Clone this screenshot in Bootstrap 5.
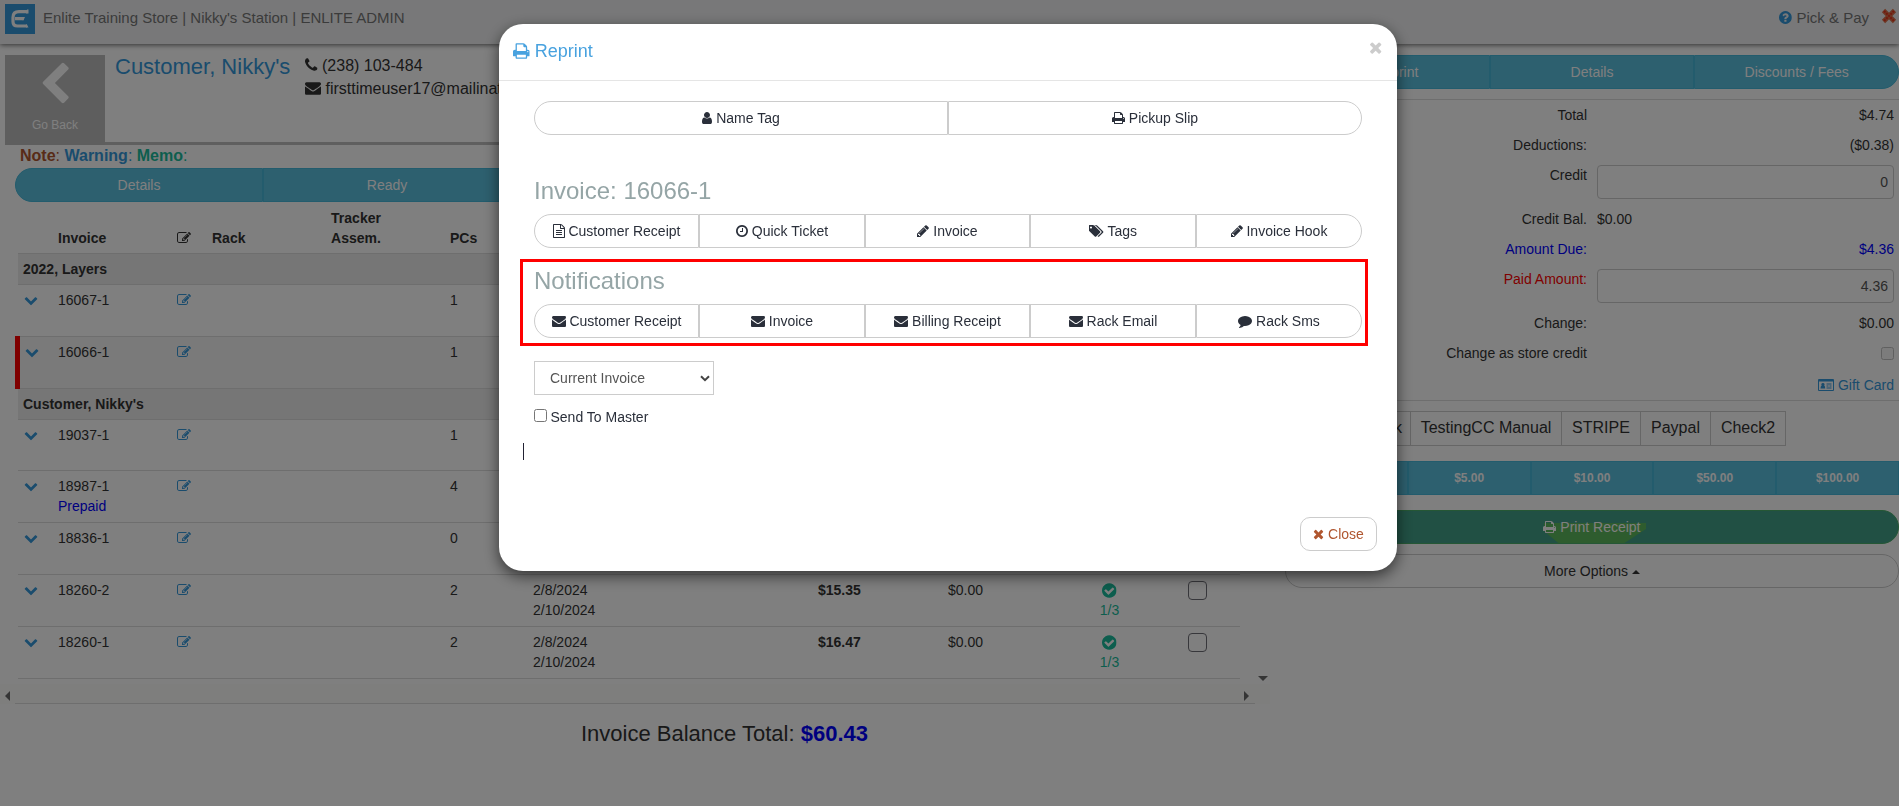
<!DOCTYPE html>
<html lang="en">
<head>
<meta charset="utf-8">
<title>Pick &amp; Pay</title>
<link href="https://cdn.jsdelivr.net/npm/bootstrap@5.3.0/dist/css/bootstrap.min.css" rel="stylesheet">
<style>
  body { font-family: "Liberation Sans", Arial, sans-serif; font-size: 14px; line-height: 20px; color: #333; overflow: hidden; height: 806px; background: #fff; }
  .btn { font-size: 14px; line-height: 20px; padding: 6px 0; white-space: nowrap; }
  .ico { height: 1em; width: 1em; fill: currentColor; vertical-align: -.143em; overflow: visible; }
  .ico-print { width: .929em; } .ico-pencil, .ico-clock, .ico-file, .ico-check, .ico-help { width: .857em; }
  .ico-tags { width: 1.071em; } .ico-user { width: .714em; } .ico-times { width: .786em; } .ico-phone { width: .786em; }
  .ico-left { width: .75em; } .ico-card { width: 1.143em; } .ico-done { font-size: 17px; line-height: 1; vertical-align: -3px; margin-bottom: -1px; }
  .link-sky { color: #3498db; } .ink-blue { color: #00f; } .ink-rust { color: #b0562f; } .ink-mint { color: #1abc9c; }

  .topbar { height: 44px; background: #f0f1f2; box-shadow: 0 1px 5px rgba(0,0,0,.6); color: #777; font-size: 15px; line-height: 20px; padding: 0 2px 8px 5px; }
  .logo { width: 30px; height: 30px; background: #3498db; margin: 2px 8px 0 0; }
  .shut { margin: -5px 0 0 12px; }
  .pane-left { width: 1270px; } .pane-right { width: 614px; padding-top: 11px; }
  .cust { height: 90px; margin: 11px 0 0 5px; border-bottom: 3px solid #bfbfbf; }
  .goback { width: 100px; height: 90px; background: #bcbcbc; color: #fff; font-size: 12px; padding-top: 7px; line-height: 16px; }
  .goback svg { font-size: 45px; display: block; margin: 0 auto 10px; }
  .cust-name { font-size: 22px; line-height: 24px; margin: 0 0 0 10px; width: 190px; }
  .cust-info { font-size: 16px; line-height: 23px; margin-top: -1px; white-space: nowrap; }
  .notes { font-size: 16px; line-height: 21px; padding: 0 0 2px 20px; }
  .bar-info { height: 34px; }
  .bar-info .btn { background: #5bc0de; border: 1px solid #46b8da; color: #fff; flex: 1 1 0; border-radius: 0; margin: 0 !important; padding: 6px 0; }
  .bar-left { width: 1240px; margin-left: 15px; }
  .round-l > :first-child { border-radius: 17px 0 0 17px !important; } .round-r > :last-child { border-radius: 0 17px 17px 0 !important; }

  .inv { table-layout: fixed; width: 1222px; margin: 0 0 0 18px; color: #333; border-collapse: separate; border-spacing: 0; }
  .inv td, .inv th { padding: 5px 5px 0; vertical-align: top; border-top: 1px solid #dcdcdc; height: 52px; }
  .inv td:first-child { padding-left: 6px; } .inv .grp td:first-child { padding-left: 5px; }
  .inv thead th { border: 0; vertical-align: bottom; padding: 0 5px 5px; height: 51px; }
  .inv .h51 td { height: 51px; } .inv .grp td { height: 31px; background: #ececec; font-weight: 700; }
  .inv .sel td { background: #f4f4f4; } .inv .sel td:first-child { position: relative; padding-left: 7px; }
  .inv .sel td:first-child::before { content: ""; position: absolute; left: -3px; top: -1px; width: 5px; height: 53px; background: #f00; }
  .inv .last td { border-bottom: 1px solid #dcdcdc; height: 53px; }
  .cbx { display: inline-block; width: 19px; height: 19px; border: 1.5px solid #6f6f77; border-radius: 4px; margin-top: 1px; }
  .scroll-x { height: 25px; width: 1270px; background: linear-gradient(#fff 5px, #fdfdfa 5px); }
  .scroll-x .track { border-bottom: 1px solid #dcdcdc; width: 1240px; }
  .tri { width: 0; height: 0; border: 5px solid transparent; }
  .tri-l { border-right: 5px solid #6a6a6a; border-left: 0; } .tri-r { border-left: 5px solid #6a6a6a; border-right: 0; }
  .tri-d { border-top: 5px solid #6a6a6a; border-bottom: 0; }
  .total { font-size: 22px; line-height: 30px; width: 1449px; margin-top: 15px; }

  .sums { border-top: 1px solid #dcdcdc; margin-top: 10px; height: 302px; border-bottom: 1px solid #dcdcdc; }
  .sumrow { padding: 5px 5px 5px 0; line-height: 20px; }
  .sumrow .lab { width: 302px; text-align: right; margin-right: 10px; }
  .sumrow .val { flex: 1; text-align: right; }
  .sumrow .form-control { width: 297px; height: 34px; border: 1px solid #ccc; border-radius: 4px; background: transparent; color: #555; font-size: 14px; text-align: right; padding: 5px 5px; }
  .mini { width: 13px; height: 13px; border: 1px solid #c0c0c0; border-radius: 2.5px; background: #f8f8f8; }
  .gift { padding-top: 7px; }
  .pays { margin-top: 10px; height: 35px; }
  .pays .btn { font-size: 16px; border: 1px solid #ccc; border-radius: 0; padding: 6px 0; height: 35px; color: #333; flex: none; margin: 0 !important; border-left: 0; }
  .cash { margin-top: 15px; } .cash .btn { font-size: 12px; font-weight: 700; }
  .btn-receipt { margin-top: 15px; height: 34px; border-radius: 17px; color: #fff; border: 1px solid #4bae6b; background: #42a088; position: relative; width: 100%; }
  .btn-receipt::before { content: ""; position: absolute; left: 258px; top: 12px; width: 102px; height: 20px; background: #5cb85c; clip-path: polygon(0 0, 100% 0, 100% 30%, 79% 100%, 14% 100%, 0 40%); }
  .btn-receipt span { position: relative; }
  .btn-more { margin-top: 10px; height: 34px; border-radius: 17px; border: 1px solid #ccc; width: 100%; color: #333; }
  .caret-up { display: inline-block; border: 4px solid transparent; border-top: 0; border-bottom-color: #333; vertical-align: 2px; }

  .reprint { width: 898px; max-width: none; margin: 24px 0 0 499px; }
  .reprint .modal-content { height: 547px; border: 0; border-radius: 24px; box-shadow: 0 5px 15px rgba(0,0,0,.6); color: #2a2f3a; }
  .reprint .modal-header { height: 57px; border-bottom: 1px solid #e5e5e5; padding: 0 15px 0 14px; align-items: flex-start; }
  .reprint .modal-title { font-size: 18px; line-height: 20px; color: #48a2df; margin-top: 17px; font-weight: 400; }
  .reprint .dismiss { color: #ccc; font-size: 17px; line-height: 17px; margin-top: 15px; }
  .reprint .modal-body { padding: 20px 35px 0; flex: none; }
  .btns { display: grid; grid-template-columns: 1fr 1fr; height: 34px; width: 828px; }
  .btns-five { grid-template-columns: 165px 166px 165px 166px 166px; }
  .btns .btn { border: 1px solid #ccc; border-radius: 0; color: #2a2f3a; }
  .sect { font-size: 24px; line-height: 26px; color: #95a5a6; margin: 0; font-weight: 400; }
  .boxed { border: 3px solid #f00; width: 848px; height: 87px; margin: 11px 0 0 -14px; padding: 13px 11px 0; }
  .pick { width: 180px; height: 34px; border: 1px solid #ccc; margin-top: 15px; color: #555; padding: 6px 3px 6px 15px; }
  .tick { width: 13px; height: 13px; border: 1px solid #767676; border-radius: 2.5px; margin: 2px 3.5px 0 0; }
  .cursor-bar { width: 1px; height: 17px; background: #223; margin: 16px 0 0 -11px; }
  .btn-close-round { width: 77px; height: 34px; border: 1px solid #ccc; border-radius: 10px; color: #b0562f; margin: 57px 20px 0 auto; }
</style>
</head>
<body>
<svg width="0" height="0" class="d-none">
  <symbol id="print" viewBox="64 0 1664 1792"><path d="M448 1536h896v-256h-896v256zm0-640h896v-384h-160q-40 0-68-28t-28-68v-160h-640v640zm1152 64q0-26-19-45t-45-19-45 19-19 45 19 45 45 19 45-19 19-45zm128 0v416q0 13-9.5 22.5t-22.5 9.5h-224v160q0 40-28 68t-68 28h-960q-40 0-68-28t-28-68v-160h-224q-13 0-22.5-9.5t-9.5-22.5v-416q0-79 56.5-135.5t135.5-56.5h64v-544q0-40 28-68t68-28h672q40 0 88 20t76 48l152 152q28 28 48 76t20 88v256h64q79 0 135.5 56.5t56.5 135.5z"/></symbol>
  <symbol id="mail" viewBox="0 0 1792 1792"><path d="M1792 710v794q0 66-47 113t-113 47h-1472q-66 0-113-47t-47-113v-794q44 49 101 87 362 246 497 345 57 42 92.5 65.5t94.5 48 110 24.5h2q51 0 110-24.5t94.5-48 92.5-65.5q170-123 498-345 57-39 100-87zm0-294q0 79-49 151t-122 123q-376 261-468 325-10 7-42.5 31t-54 38.5-52 32.5-57.5 27-50 9h-2q-23 0-50-9t-57.5-27-52-32.5-54-38.5-42.5-31q-91-64-262-182.5t-205-142.5q-62-42-117-115.5t-55-136.5q0-78 41.5-130t118.5-52h1472q65 0 112.5 47t47.5 113z"/></symbol>
  <symbol id="pencil" viewBox="128 0 1536 1792"><path d="M491 1536l91-91-235-235-91 91v107h128v128h107zm523-928q0-22-22-22-10 0-17 7l-542 542q-7 7-7 17 0 22 22 22 10 0 17-7l542-542q7-7 7-17zm-54-192l416 416-832 832h-416v-416zm683 96q0 53-37 90l-166 166-416-416 166-165q36-38 90-38 53 0 91 38l235 234q37 39 37 91z"/></symbol>
  <symbol id="tags" viewBox="0 0 1920 1792"><path d="M384 448q0-53-37.5-90.5t-90.5-37.5-90.5 37.5-37.5 90.5 37.5 90.5 90.5 37.5 90.5-37.5 37.5-90.5zm1067 576q0 53-37 90l-491 492q-39 37-91 37-53 0-90-37l-715-716q-38-37-64.5-101t-26.5-117v-416q0-52 38-90t90-38h416q53 0 117 26.5t102 64.5l715 714q37 39 37 91zm384 0q0 53-37 90l-491 492q-39 37-91 37-36 0-59-14t-53-45l470-470q37-37 37-90 0-52-37-91l-715-714q-38-38-102-64.5t-117-26.5h224q53 0 117 26.5t102 64.5l715 714q37 39 37 91z"/></symbol>
  <symbol id="user" viewBox="256 0 1280 1792"><path d="M1536 1399q0 109-62.5 187t-150.5 78h-854q-88 0-150.5-78t-62.5-187q0-85 8.5-160.5t31.5-152 58.5-131 94-89 134.5-34.5q131 128 313 128t313-128q76 0 134.5 34.5t94 89 58.5 131 31.5 152 8.5 160.5zm-256-887q0 159-112.5 271.5t-271.5 112.5-271.5-112.5-112.5-271.5 112.5-271.5 271.5-112.5 271.5 112.5 112.5 271.5z"/></symbol>
  <symbol id="comment" viewBox="0 0 1792 1792"><path d="M1792 896q0 174-120 321.5t-326 233-450 85.5q-70 0-145-8-198 175-460 242-49 14-114 22-17 2-30.5-9t-17.5-29v-1q-3-4-.5-12t2-10 4.5-9.5l6-9 7-8.5 8-9q7-8 31-34.5t34.500-38 31-39.500 32.500-51 27-59 26-76q-157-89-247.500-220t-90.500-281q0-130 71-248.500t191-204.500 286-136.500 348-50.500q244 0 450 85.500t326 233 120 321.500z"/></symbol>
  <symbol id="clock" viewBox="128 0 1536 1792"><path d="M1024 544v448q0 14-9 23t-23 9h-320q-14 0-23-9t-9-23v-64q0-14 9-23t23-9h224v-352q0-14 9-23t23-9h64q14 0 23 9t9 23zm416 352q0-148-73-273t-198-198-273-73-273 73-198 198-73 273 73 273 198 198 273 73 273-73 198-198 73-273zm224 0q0 209-103 385.500t-279.500 279.500-385.500 103-385.500-103-279.500-279.500-103-385.500 103-385.500 279.500-279.500 385.500-103 385.500 103 279.500 279.500 103 385.500z"/></symbol>
  <symbol id="file" viewBox="128 0 1536 1792"><path d="M1596 380q28 28 48 76t20 88v1152q0 40-28 68t-68 28h-1344q-40 0-68-28t-28-68v-1600q0-40 28-68t68-28h896q40 0 88 20t76 48zm-444-244v376h376q-10-29-22-41l-313-313q-12-12-41-22zm384 1528v-1024h-416q-40 0-68-28t-28-68v-416h-768v1536h1280zm-1024-864q0-14 9-23t23-9h704q14 0 23 9t9 23v64q0 14-9 23t-23 9h-704q-14 0-23-9t-9-23v-64zm736 224q14 0 23 9t9 23v64q0 14-9 23t-23 9h-704q-14 0-23-9t-9-23v-64q0-14 9-23t23-9h704zm0 256q14 0 23 9t9 23v64q0 14-9 23t-23 9h-704q-14 0-23-9t-9-23v-64q0-14 9-23t23-9h704z"/></symbol>
  <symbol id="phone" viewBox="192 0 1408 1792"><path d="M1600 1240q0 27-10 70.500t-21 68.500q-21 50-122 106-94 51-186 51-27 0-53-3.500t-57.500-12.500-47-14.500-55.500-20.500-49-18q-98-35-175-83-127-79-264-216t-216-264q-48-77-83-175-3-9-18-49t-20.500-55.500-14.500-47-12.500-57.500-3.500-53q0-92 51-186 56-101 106-122 25-11 68.500-21t70.500-10q14 0 21 3 18 6 53 76 11 19 30 54t35 63.500 31 53.500q3 4 17.500 25t21.500 35.500 7 28.500q0 20-28.500 50t-62 55-62 53-28.500 46q0 9 5 22.500t8.500 20.500 14 24 11.500 19q76 137 174 235t235 174q2 1 19 11.500t24 14 20.500 8.500 22.500 5q18 0 46-28.500t53-62 55-62 50-28.500q14 0 28.500 7t35.500 21.500 25 17.500q25 15 53.500 31t63.500 35 54 30q70 35 76 53 3 7 3 21z"/></symbol>
  <symbol id="edit" viewBox="0 0 1792 1792"><path d="M888 1184l116-116-152-152-116 116v56h96v96h56zm440-720q-16-16-33 1l-350 350q-17 17-1 33t33-1l350-350q17-17 1-33zm80 594v190q0 119-84.500 203.500t-203.500 84.500h-832q-119 0-203.500-84.500t-84.500-203.500v-832q0-119 84.500-203.500t203.500-84.500h832q63 0 117 25 15 7 18 23 3 17-9 29l-49 49q-14 14-32 8-23-6-45-6h-832q-66 0-113 47t-47 113v832q0 66 47 113t113 47h832q66 0 113-47t47-113v-126q0-13 9-22l64-64q15-15 35-7t20 29zm-96-738l288 288-672 672h-288v-288zm444 132l-92 92-288-288 92-92q28-28 68-28t68 28l152 152q28 28 28 68t-28 68z"/></symbol>
  <symbol id="down" viewBox="0 0 1792 1792"><path d="M1683 808l-742 741q-19 19-45 19t-45-19l-742-741q-19-19-19-45.500t19-45.500l166-165q19-19 45-19t45 19l531 531 531-531q19-19 45-19t45 19l166 165q19 19 19 45.500t-19 45.500z"/></symbol>
  <symbol id="left" viewBox="224 0 1344 1792"><path d="M1427 301l-531 531 531 531q19 19 19 45t-19 45l-166 166q-19 19-45 19t-45-19l-742-742q-19-19-19-45t19-45l742-742q19-19 45-19t45 19l166 166q19 19 19 45t-19 45z"/></symbol>
  <symbol id="check" viewBox="128 0 1536 1792"><path d="M1412 734q0-28-18-46l-91-90q-19-19-45-19t-45 19l-408 407-226-226q-19-19-45-19t-45 19l-91 90q-18 18-18 46 0 27 18 45l362 362q19 19 45 19 27 0 46-19l543-543q18-18 18-45zm252 162q0 209-103 385.500t-279.500 279.500-385.500 103-385.500-103-279.500-279.500-103-385.500 103-385.500 279.500-279.500 385.500-103 385.500 103 279.500 279.500 103 385.500z"/></symbol>
  <symbol id="times" viewBox="192 0 1408 1792"><path d="M1490 1322q0 40-28 68l-136 136q-28 28-68 28t-68-28l-294-294-294 294q-28 28-68 28t-68-28l-136-136q-28-28-28-68t28-68l294-294-294-294q-28-28-28-68t28-68l136-136q28-28 68-28t68 28l294 294 294-294q28-28 68-28t68 28l136 136q28 28 28 68t-28 68l-294 294 294 294q28 28 28 68z"/></symbol>
  <symbol id="help" viewBox="128 0 1536 1792"><path d="M1024 1376v-192q0-14-9-23t-23-9h-192q-14 0-23 9t-9 23v192q0 14 9 23t23 9h192q14 0 23-9t9-23zm256-672q0-88-55.500-163t-138.500-116-170-41q-243 0-371 213-15 24 8 42l132 100q7 6 19 6 16 0 25-12 53-68 86-92 34-24 86-24 48 0 85.500 26t37.500 59q0 38-20 61t-68 45q-63 28-115.500 86.500t-52.500 125.500v36q0 14 9 23t23 9h192q14 0 23-9t9-23q0-19 21.500-49.500t54.500-49.500q32-18 49-28.500t46-35 44.500-48 28-60.500 12.500-81zm384 192q0 209-103 385.500t-279.500 279.500-385.500 103-385.500-103-279.500-279.500-103-385.500 103-385.500 279.500-279.500 385.500-103 385.500 103 279.500 279.500 103 385.500z"/></symbol>
  <symbol id="idcard" viewBox="0 0 16 14"><path fill-rule="evenodd" d="M1 1h14q1 0 1 1v10q0 1-1 1H1q-1 0-1-1V2q0-1 1-1zm0 2.500v8.500h14V3.500zM5 5a1.500 1.500 0 0 1 1.200 2.500q1 .6 1 3H2.500q0-2.400 1.200-3A1.500 1.500 0 0 1 5 5zm3.500.5h5v1h-5zm0 2h2v1h-2zm3 0h2v1h-2zm-3 2h5v1h-5z"/></symbol>
</svg>

<header class="topbar d-flex align-items-center position-relative">
  <svg class="logo" viewBox="0 0 30 30"><path d="M22.500 7.700H14q-6 0-6 5.800v4.200q0 4.300 4.500 4.300H22M10 14.700h8.500" fill="none" stroke="#fff" stroke-width="3.200"/><path d="M23.500 5.500v4h-2.500l1-4zM17.500 13h2.500l-1.500 3.300h-1zM21 20.400h1l1.500 3.200H21z" fill="#fff"/></svg>
  <span>Enlite Training Store | Nikky's Station | ENLITE ADMIN</span>
  <span class="ms-auto"><svg class="ico ico-help link-sky"><use href="#help"/></svg> Pick &amp; Pay</span>
  <svg class="shut" width="16" height="16" viewBox="0 0 16 16"><path d="M2.500 2.500l11 11M13.500 2.500l-11 11" stroke="#d9704a" stroke-width="4.600"/><path d="M3 3l10 10M13 3L3 13" stroke="#e8331c" stroke-width="2" stroke-dasharray="2 1"/></svg>
</header>

<main class="d-flex justify-content-between">
  <section class="pane-left">
    <div class="cust d-flex">
      <div class="goback text-center"><svg class="ico ico-left"><use href="#left"/></svg>Go Back</div>
      <div class="cust-name link-sky">Customer, Nikky's</div>
      <div class="cust-info">
        <div><svg class="ico ico-phone"><use href="#phone"/></svg> (238) 103-484</div>
        <div><svg class="ico"><use href="#mail"/></svg> firsttimeuser17@mailinat</div>
      </div>
    </div>
    <div class="notes"><span class="ink-rust"><b>Note</b>:</span> <span class="link-sky"><b>Warning</b>:</span> <span class="ink-mint"><b>Memo</b>:</span></div>
    <div class="bar-info bar-left btn-group round-l round-r d-flex">
      <a class="btn">Details</a><a class="btn">Ready</a><a class="btn"></a><a class="btn"></a><a class="btn"></a>
    </div>
    <table class="inv">
      <colgroup><col style="width:35px"><col style="width:119px"><col style="width:35px"><col style="width:60px"><col style="width:178px"><col style="width:83px"><col style="width:285px"><col style="width:130px"><col style="width:121px"><col style="width:91px"><col style="width:85px"></colgroup>
      <thead><tr><th></th><th>Invoice</th><th><svg class="ico"><use href="#edit"/></svg></th><th>Rack</th><th class="text-center">Tracker<br>Assem.</th><th>PCs</th><th></th><th></th><th></th><th></th><th></th></tr></thead>
      <tbody>
        <tr class="grp"><td colspan="11">2022, Layers</td></tr>
        <tr><td><svg class="ico link-sky"><use href="#down"/></svg></td><td>16067-1</td><td><svg class="ico link-sky"><use href="#edit"/></svg></td><td></td><td></td><td>1</td><td colspan="5"></td></tr>
        <tr class="sel"><td><svg class="ico link-sky"><use href="#down"/></svg></td><td>16066-1</td><td><svg class="ico link-sky"><use href="#edit"/></svg></td><td></td><td></td><td>1</td><td colspan="5"></td></tr>
        <tr class="grp"><td colspan="11">Customer, Nikky's</td></tr>
        <tr class="h51"><td><svg class="ico link-sky"><use href="#down"/></svg></td><td>19037-1</td><td><svg class="ico link-sky"><use href="#edit"/></svg></td><td></td><td></td><td>1</td><td colspan="5"></td></tr>
        <tr><td><svg class="ico link-sky"><use href="#down"/></svg></td><td>18987-1<br><span class="ink-blue">Prepaid</span></td><td><svg class="ico link-sky"><use href="#edit"/></svg></td><td></td><td></td><td>4</td><td colspan="5"></td></tr>
        <tr><td><svg class="ico link-sky"><use href="#down"/></svg></td><td>18836-1</td><td><svg class="ico link-sky"><use href="#edit"/></svg></td><td></td><td></td><td>0</td><td colspan="5"></td></tr>
        <tr><td><svg class="ico link-sky"><use href="#down"/></svg></td><td>18260-2</td><td><svg class="ico link-sky"><use href="#edit"/></svg></td><td></td><td></td><td>2</td><td>2/8/2024<br>2/10/2024</td><td><b>$15.35</b></td><td>$0.00</td><td class="text-center ink-mint"><svg class="ico ico-check ico-done"><use href="#check"/></svg><br>1/3</td><td class="text-center"><span class="cbx"></span></td></tr>
        <tr class="last"><td><svg class="ico link-sky"><use href="#down"/></svg></td><td>18260-1</td><td><svg class="ico link-sky"><use href="#edit"/></svg></td><td></td><td></td><td>2</td><td>2/8/2024<br>2/10/2024</td><td><b>$16.47</b></td><td>$0.00</td><td class="text-center ink-mint"><svg class="ico ico-check ico-done"><use href="#check"/></svg><br>1/3</td><td class="text-center"><span class="cbx"></span></td></tr>
      </tbody>
    </table>
    <div class="scroll-x d-flex">
      <div class="tri tri-l" style="margin:12px 5px 0"></div>
      <div class="track d-flex justify-content-end"><div class="tri tri-r" style="margin:12px 6px 0"></div></div>
      <div class="tri tri-d" style="margin:-3px 0 0 3px"></div>
    </div>
    <div class="total text-center">Invoice Balance Total: <b class="ink-blue">$60.43</b></div>
  </section>

  <section class="pane-right">
    <div class="bar-info btn-group round-l round-r d-flex">
      <a class="btn"><svg class="ico ico-print"><use href="#print"/></svg> Reprint</a><a class="btn">Details</a><a class="btn">Discounts / Fees</a>
    </div>
    <div class="sums">
      <div class="sumrow d-flex"><div class="lab">Total</div><div class="val">$4.74</div></div>
      <div class="sumrow d-flex"><div class="lab">Deductions:</div><div class="val">($0.38)</div></div>
      <div class="sumrow d-flex"><div class="lab">Credit</div><input class="form-control" value="0"></div>
      <div class="sumrow d-flex"><div class="lab">Credit Bal.</div><div class="val text-start">$0.00</div></div>
      <div class="sumrow d-flex ink-blue"><div class="lab">Amount Due:</div><div class="val">$4.36</div></div>
      <div class="sumrow d-flex"><div class="lab" style="color:#f00">Paid Amount:</div><input class="form-control" value="4.36"></div>
      <div class="sumrow d-flex"><div class="lab">Change:</div><div class="val">$0.00</div></div>
      <div class="sumrow d-flex"><div class="lab">Change as store credit</div><div class="mini ms-auto mt-1"></div></div>
      <div class="sumrow gift link-sky text-end"><svg class="ico ico-card"><use href="#idcard"/></svg> Gift Card</div>
    </div>
    <div class="pays d-flex">
      <a class="btn text-end pe-2" style="width:126px">Check</a><a class="btn" style="width:151px">TestingCC Manual</a><a class="btn" style="width:79px">STRIPE</a><a class="btn" style="width:70px">Paypal</a><a class="btn" style="width:75px">Check2</a>
    </div>
    <div class="bar-info cash btn-group d-flex">
      <a class="btn"></a><a class="btn">$5.00</a><a class="btn">$10.00</a><a class="btn">$50.00</a><a class="btn">$100.00</a>
    </div>
    <a class="btn btn-receipt d-block"><span><svg class="ico ico-print"><use href="#print"/></svg> Print Receipt</span></a>
    <a class="btn btn-more d-block">More Options <span class="caret-up"></span></a>
  </section>
</main>

<div class="modal-backdrop show"></div>
<div class="modal show d-block overflow-hidden" tabindex="-1">
  <div class="modal-dialog reprint">
    <div class="modal-content">
      <div class="modal-header">
        <h4 class="modal-title"><svg class="ico ico-print"><use href="#print"/></svg> Reprint</h4>
        <span class="dismiss"><svg class="ico ico-times"><use href="#times"/></svg></span>
      </div>
      <div class="modal-body">
        <div class="btns round-l round-r">
          <a class="btn"><svg class="ico ico-user"><use href="#user"/></svg> Name Tag</a>
          <a class="btn"><svg class="ico ico-print"><use href="#print"/></svg> Pickup Slip</a>
        </div>
        <h3 class="sect" style="margin:43px 0 10px">Invoice: 16066-1</h3>
        <div class="btns btns-five round-l round-r">
          <a class="btn"><svg class="ico ico-file"><use href="#file"/></svg> Customer Receipt</a>
          <a class="btn"><svg class="ico ico-clock"><use href="#clock"/></svg> Quick Ticket</a>
          <a class="btn"><svg class="ico ico-pencil"><use href="#pencil"/></svg> Invoice</a>
          <a class="btn"><svg class="ico ico-tags"><use href="#tags"/></svg> Tags</a>
          <a class="btn"><svg class="ico ico-pencil"><use href="#pencil"/></svg> Invoice Hook</a>
        </div>
        <div class="boxed">
          <h3 class="sect" style="margin:-7px 0 10px">Notifications</h3>
          <div class="btns btns-five round-l round-r">
            <a class="btn"><svg class="ico"><use href="#mail"/></svg> Customer Receipt</a>
            <a class="btn"><svg class="ico"><use href="#mail"/></svg> Invoice</a>
            <a class="btn"><svg class="ico"><use href="#mail"/></svg> Billing Receipt</a>
            <a class="btn"><svg class="ico"><use href="#mail"/></svg> Rack Email</a>
            <a class="btn"><svg class="ico"><use href="#comment"/></svg> Rack Sms</a>
          </div>
        </div>
        <div class="pick d-flex justify-content-between align-items-center">Current Invoice<svg width="10" height="7" viewBox="0 0 10 7"><path d="M1 1.200l4 4 4-4" fill="none" stroke="#444" stroke-width="2"/></svg></div>
        <div class="d-flex mt-2 pt-1"><div class="tick"></div>Send To Master</div>
        <div class="cursor-bar"></div>
      </div>
      <a class="btn btn-close-round"><svg class="ico ico-times"><use href="#times"/></svg> Close</a>
    </div>
  </div>
</div>
<script src="https://cdn.jsdelivr.net/npm/bootstrap@5.3.0/dist/js/bootstrap.bundle.min.js"></script>
</body>
</html>
